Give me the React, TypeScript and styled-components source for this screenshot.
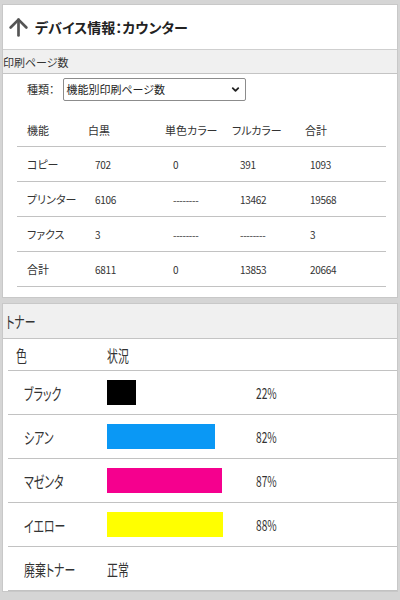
import React from "react";
import styled, { createGlobalStyle } from "styled-components";
import { ArrowUp, ChevronDown } from "lucide-react";

const GlobalStyle = createGlobalStyle`
  html, body {
    margin: 0;
    padding: 0;
    background: #d5d5d5;
  }
  body {
    font-family: "Noto Sans CJK JP", "Noto Sans", sans-serif;
    font-feature-settings: "palt";
    color: #333;
  }
`;

const Page = styled.div`
  width: 400px;
  height: 600px;
  overflow: hidden;
  padding: 5px 3px 0 3px;
  box-sizing: border-box;
  display: flex;
  flex-direction: column;
  gap: 7px;
`;

const Card = styled.section`
  background: #fff;
  box-shadow: 0 0 0 1px #c8c8c8;
  flex-shrink: 0;
`;

const TitleBar = styled.header`
  height: 44px;
  display: flex;
  align-items: center;
  gap: 3px;
  padding-left: 2px;
  border-bottom: 1px solid #cfcfcf;
  font-size: 14px;
  font-weight: 700;
  color: #222;
`;

const SectionBar = styled.div<{ tall?: boolean }>`
  height: ${({ tall }) => (tall ? "34px" : "23px")};
  display: flex;
  align-items: center;
  padding-left: ${({ tall }) => (tall ? "3px" : "0")};
  background: #f0f0f0;
  border-bottom: 1px solid #c4c4c4;
  font-size: ${({ tall }) => (tall ? "16px" : "11px")};
  color: #333;
`;

const KindRow = styled.div`
  display: flex;
  align-items: center;
  gap: 8px;
  box-sizing: border-box;
  height: 37px;
  padding: 0 0 7px 24px;
  font-size: 11px;
`;

const Select = styled.div`
  width: 183px;
  height: 23px;
  box-sizing: border-box;
  border: 1px solid #8c8c8c;
  border-radius: 2px;
  display: flex;
  align-items: center;
  justify-content: space-between;
  padding: 0 4px 0 3px;
  font-size: 11px;
  color: #222;
`;

const Table = styled.div`
  margin: 2px 11px 10px 14px;
`;

const TRow = styled.div<{ h: number }>`
  display: grid;
  grid-template-columns: 71px 77px 67px 73px 1fr;
  align-items: center;
  height: ${({ h }) => h}px;
  border-bottom: 1px solid #c2c2c2;
  font-size: 11px;
`;

const Cell = styled.div<{ indent?: number }>`
  padding-left: ${({ indent }) => indent ?? 10}px;
  white-space: nowrap;
`;

const Num = styled(Cell)`
  font-size: 10px;
  letter-spacing: -0.3px;
`;

const Squeeze = styled.span`
  display: inline-block;
  transform: scaleX(0.68);
  transform-origin: left center;
  white-space: nowrap;
`;

const TonerRow = styled.div<{ h: number }>`
  display: grid;
  grid-template-columns: 99px 149px 1fr;
  align-items: center;
  height: ${({ h }) => h}px;
  margin-left: 5px;
  border-bottom: 1px solid #c2c2c2;
  font-size: 16px;
`;

const TonerLabel = styled.div<{ indent: number }>`
  padding-left: ${({ indent }) => indent}px;
`;

const Bar = styled.div<{ color: string }>`
  height: 25px;
  background: ${({ color }) => color};
`;

const Pct = styled.div`
  font-size: 15px;
`;

const counters = [
  ["コピー", "702", "0", "391", "1093"],
  ["プリンター", "6106", "--------", "13462", "19568"],
  ["ファクス", "3", "--------", "--------", "3"],
  ["合計", "6811", "0", "13853", "20664"],
];

const toners = [
  { name: "ブラック", color: "#000000", pct: 22 },
  { name: "シアン", color: "#0a98f5", pct: 82 },
  { name: "マゼンタ", color: "#f5008e", pct: 87 },
  { name: "イエロー", color: "#ffff00", pct: 88 },
];

export default function App() {
  return (
    <>
      <GlobalStyle />
      <Page>
        <Card>
          <TitleBar>
            <ArrowUp size={27} strokeWidth={2.4} color="#555" />
            デバイス情報：カウンター
          </TitleBar>
          <SectionBar>印刷ページ数</SectionBar>
          <KindRow>
            種類：
            <Select>
              機能別印刷ページ数
              <ChevronDown size={11} strokeWidth={4} color="#222" />
            </Select>
          </KindRow>
          <Table>
            <TRow h={33}>
              <Cell>機能</Cell>
              <Cell indent={0}>白黒</Cell>
              <Cell indent={0}>単色カラー</Cell>
              <Cell indent={0}>フルカラー</Cell>
              <Cell indent={0}>合計</Cell>
            </TRow>
            {counters.map((r) => (
              <TRow h={34} key={r[0]}>
                <Cell>{r[0]}</Cell>
                <Num indent={7}>{r[1]}</Num>
                <Num indent={8}>{r[2]}</Num>
                <Num indent={8}>{r[3]}</Num>
                <Num indent={5}>{r[4]}</Num>
              </TRow>
            ))}
          </Table>
        </Card>
        <Card>
          <SectionBar tall>
            <Squeeze>トナー</Squeeze>
          </SectionBar>
          <TonerRow h={31}>
            <TonerLabel indent={8}>
              <Squeeze>色</Squeeze>
            </TonerLabel>
            <div>
              <Squeeze>状況</Squeeze>
            </div>
            <div />
          </TonerRow>
          {toners.map((t) => (
            <TonerRow h={43} key={t.name}>
              <TonerLabel indent={16}>
                <Squeeze>{t.name}</Squeeze>
              </TonerLabel>
              <div>
                <Bar color={t.color} style={{ width: `${Math.round(t.pct * 1.32)}px` }} />
              </div>
              <Pct>
                <Squeeze>{t.pct}%</Squeeze>
              </Pct>
            </TonerRow>
          ))}
          <TonerRow h={43}>
            <TonerLabel indent={16}>
              <Squeeze>廃棄トナー</Squeeze>
            </TonerLabel>
            <div>
              <Squeeze>正常</Squeeze>
            </div>
            <div />
          </TonerRow>
        </Card>
      </Page>
    </>
  );
}
